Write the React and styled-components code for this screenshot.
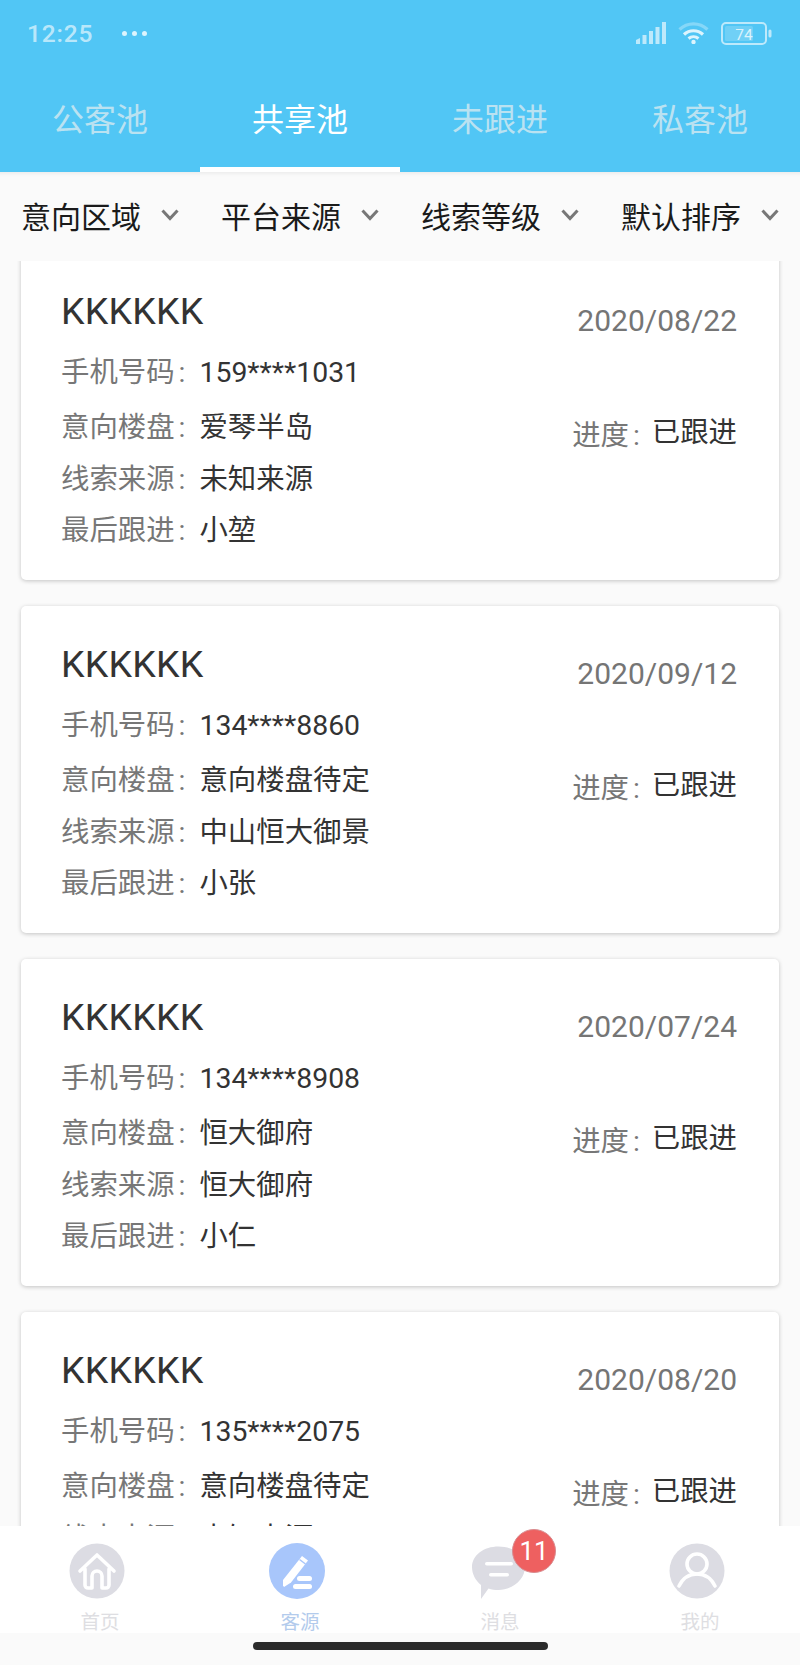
import styled, { createGlobalStyle } from "styled-components";

const GlobalStyle = createGlobalStyle`
  html, body {
    margin: 0;
    padding: 0;
    background: #fafafa;
  }

  * {
    box-sizing: border-box;
  }
`;

const Page = styled.div`
  display: flex;
  flex-direction: column;
  width: 800px;
  height: 1665px;
  overflow: hidden;
  background: #fafafa;
  font-family: Roboto, "Noto Sans CJK SC", sans-serif;
`;

const Header = styled.header`
  flex: none;
  height: 172px;
  background: #51c6f5;
`;

const StatusBar = styled.div`
  display: flex;
  align-items: center;
  height: 66px;
  padding: 0 28px 0 27px;
  color: rgba(255, 255, 255, 0.62);
`;

const Clock = styled.span`
  font-size: 24.5px;
  font-weight: 500;
  letter-spacing: 0.8px;
`;

const Dots = styled.div`
  display: flex;
  gap: 5px;
  margin-left: 29px;

  i {
    width: 5px;
    height: 5px;
    border-radius: 50%;
    background: rgba(255, 255, 255, 0.8);
  }
`;

const StatusIcons = styled.div`
  display: flex;
  align-items: center;
  gap: 12px;
  margin-left: auto;
`;

const Tabs = styled.nav`
  display: grid;
  grid-template-columns: repeat(4, 200px);
  height: 106px;
`;

const Tab = styled.div`
  display: flex;
  align-items: center;
  justify-content: center;
  border-bottom: 5px solid ${(p) => (p.$active ? "#ffffff" : "transparent")};
  color: ${(p) => (p.$active ? "#ffffff" : "rgba(235, 240, 240, 0.7)")};
  font-size: 32px;
`;

const FilterBar = styled.div`
  flex: none;
  display: grid;
  grid-template-columns: repeat(4, 200px);
  height: 89px;
  box-shadow: inset 0 5px 4px -4px rgba(0, 0, 0, 0.08);
`;

const Filter = styled.div`
  display: flex;
  align-items: center;
  gap: 20px;
  padding: 0 0 4px 21px;
  color: #1a1a1a;
  font-size: 30px;
`;

const ListWindow = styled.div`
  flex: 1;
  min-height: 0;
  overflow: hidden;
`;

const List = styled.div`
  display: flex;
  flex-direction: column;
  gap: 26px;
  margin-top: -8px;
  padding: 0 21px;
`;

const Card = styled.article`
  display: flex;
  justify-content: space-between;
  flex: none;
  height: 327px;
  padding: 0 42px 0 40px;
  background: #ffffff;
  border-radius: 5px;
  box-shadow: 0 1px 4px rgba(0, 0, 0, 0.22);
`;

const CardMain = styled.div`
  display: flex;
  flex-direction: column;
  padding-top: 33px;
`;

const Name = styled.div`
  height: 56.5px;
  color: #333333;
  font-size: 37.5px;
  line-height: 50px;
  letter-spacing: 0.2px;
`;

const Row = styled.div`
  height: ${(p) => p.$height}px;
  font-size: 28.4px;
  line-height: ${(p) => p.$height}px;
  white-space: nowrap;
`;

const Label = styled.span`
  color: #777777;
`;

const Colon = styled.span`
  margin-left: 4px;
`;

const Value = styled.span`
  margin-left: 14px;
  color: #333333;
`;

const CardSide = styled.div`
  display: flex;
  flex-direction: column;
  align-items: flex-end;
  padding-top: 46px;
`;

const DateText = styled.div`
  height: 44px;
  color: #757575;
  font-size: 30px;
  line-height: 44px;
`;

const Progress = styled.div`
  display: flex;
  align-items: flex-start;
  margin-top: 68px;
  font-size: 28.4px;
  line-height: 44px;
  white-space: nowrap;
`;

const ProgressLabel = styled(Label)`
  padding-top: 3px;
`;

const ProgressValue = styled(Value)`
  margin-left: 12px;
`;

const TabBar = styled.footer`
  flex: none;
  display: grid;
  grid-template-columns: repeat(4, 200px);
  height: 107px;
  background: #ffffff;
`;

const TabItem = styled.div`
  display: flex;
  flex-direction: column;
  align-items: center;
  padding-top: 17px;
  color: ${(p) => (p.$active ? "#b3cbec" : "#dedee2")};
  font-size: 19.5px;
  line-height: 20px;
`;

const TabIcon = styled.div`
  position: relative;
  width: 56px;
  height: 56px;
  margin: 0 6px 14px 0;
`;

const Badge = styled.span`
  position: absolute;
  top: -14px;
  left: 43px;
  display: flex;
  align-items: center;
  justify-content: center;
  width: 44px;
  height: 44px;
  border: 1px solid #d98b8f;
  border-radius: 50%;
  background: #ee6060;
  color: #ffffff;
  font-size: 26px;
`;

const GestureBar = styled.div`
  flex: none;
  display: flex;
  justify-content: center;
  height: 32px;
  padding-top: 9px;
  background: #fafafa;

  i {
    width: 295px;
    height: 8px;
    border-radius: 4px;
    background: #2b2b2b;
  }
`;

const SignalIcon = () => (
  <svg width="30" height="22" viewBox="0 0 30 22" fill="rgba(255,255,255,0.62)">
    <path d="M0 18l4-2v6H0z" />
    <rect x="6.5" y="13" width="4" height="9" />
    <rect x="13" y="9" width="4" height="13" />
    <rect x="19.5" y="5" width="4" height="17" />
    <rect x="26" y="0" width="4" height="22" />
  </svg>
);

const WifiIcon = () => (
  <svg width="31" height="22" viewBox="0 0 31 22" fill="none" strokeLinecap="butt">
    <path d="M1.5 7.5C9.500 0 21.500 0 29.500 7.500" stroke="rgba(255,255,255,0.3)" strokeWidth="3.200" />
    <path d="M6 12.500C11.500 7.500 19.500 7.500 25 12.500" stroke="rgba(255,255,255,0.8)" strokeWidth="3.200" />
    <path d="M10.500 16.500C13.500 14 17.500 14 20.500 16.500" stroke="rgba(255,255,255,0.8)" strokeWidth="3" />
    <circle cx="15.500" cy="20" r="2.200" fill="rgba(255,255,255,0.8)" />
  </svg>
);

const BatteryIcon = () => (
  <svg width="51" height="23" viewBox="0 0 51 23">
    <rect x="1" y="1" width="44" height="21" rx="4" fill="none" stroke="rgba(255,255,255,0.62)" strokeWidth="2" />
    <rect x="4" y="4" width="28" height="15" rx="1.500" fill="rgba(255,255,255,0.18)" />
    <rect x="47.500" y="7.500" width="3" height="8" rx="1.500" fill="rgba(255,255,255,0.62)" />
    <text x="23" y="17.500" textAnchor="middle" fontSize="15.500" fontFamily="Roboto, sans-serif" fill="rgba(255,255,255,0.75)">74</text>
  </svg>
);

const Chevron = () => (
  <svg width="18" height="12" viewBox="0 0 18 12" fill="none">
    <path d="M1.500 1.500L9 9.500l7.500-8" stroke="#777777" strokeWidth="3" />
  </svg>
);

const HomeIcon = () => (
  <svg width="56" height="56" viewBox="0 0 56 56">
    <circle cx="28" cy="28" r="27.500" fill="#dcdce3" />
    <path
      d="M11 28L28 12l17 16M16 26v16a3 3 0 0 0 3 3h4V33a5 5 0 0 1 10 0v12h4a3 3 0 0 0 3-3V26"
      fill="none"
      stroke="#ffffff"
      strokeWidth="3.600"
      strokeLinecap="round"
      strokeLinejoin="round"
    />
  </svg>
);

const SourceIcon = () => (
  <svg width="56" height="56" viewBox="0 0 56 56">
    <circle cx="28" cy="28" r="28" fill="#a8c6fb" />
    <path d="M33 13l6 4.500-17 22-7 4.500-1-1.500V37z" fill="#ffffff" />
    <path d="M30.500 16.500l6 4.500" stroke="#a8c6fb" strokeWidth="1.500" />
    <rect x="28" y="33" width="15" height="5" rx="2.500" fill="#ffffff" />
    <rect x="24" y="41" width="19" height="5" rx="2.500" fill="#ffffff" />
  </svg>
);

const MessageIcon = () => (
  <svg width="56" height="56" viewBox="-2 0 56 56">
    <path
      d="M1 24C1 12 13 3.500 27.500 3.500S54 12 54 24 42 47 27.500 47c-3.500 0-7-.5-10-1.500L10 56v-14C4.500 37.500 1 31 1 24z"
      fill="#dcdce3"
    />
    <rect x="14" y="19" width="28" height="3.500" rx="1.750" fill="#ffffff" />
    <rect x="18" y="30" width="20" height="3.500" rx="1.750" fill="#ffffff" />
  </svg>
);

const UserIcon = () => (
  <svg width="56" height="56" viewBox="0 0 56 56">
    <circle cx="28" cy="28" r="27.500" fill="#dcdce3" />
    <circle cx="28" cy="21" r="10" fill="none" stroke="#ffffff" strokeWidth="3.600" />
    <path d="M10 43c4-8 10-12 18-12s14 4 18 12" fill="none" stroke="#ffffff" strokeWidth="3.600" strokeLinecap="round" />
  </svg>
);

const tabs = ["公客池", "共享池", "未跟进", "私客池"];
const filters = ["意向区域", "平台来源", "线索等级", "默认排序"];

const leads = [
  { date: "2020/08/22", phone: "159****1031", estate: "爱琴半岛", source: "未知来源", last: "小堃" },
  { date: "2020/09/12", phone: "134****8860", estate: "意向楼盘待定", source: "中山恒大御景", last: "小张" },
  { date: "2020/07/24", phone: "134****8908", estate: "恒大御府", source: "恒大御府", last: "小仁" },
  { date: "2020/08/20", phone: "135****2075", estate: "意向楼盘待定", source: "未知来源", last: "小张" },
];

const App = () => {
  return (
    <Page>
      <GlobalStyle />
      <Header>
        <StatusBar>
          <Clock>12:25</Clock>
          <Dots>
            <i />
            <i />
            <i />
          </Dots>
          <StatusIcons>
            <SignalIcon />
            <WifiIcon />
            <BatteryIcon />
          </StatusIcons>
        </StatusBar>
        <Tabs>
          {tabs.map((tab) => (
            <Tab key={tab} $active={tab === "共享池"}>
              {tab}
            </Tab>
          ))}
        </Tabs>
      </Header>
      <FilterBar>
        {filters.map((filter) => (
          <Filter key={filter}>
            {filter}
            <Chevron />
          </Filter>
        ))}
      </FilterBar>
      <ListWindow>
        <List>
          {leads.map((lead) => (
            <Card key={lead.phone}>
              <CardMain>
                <Name>KKKKKK</Name>
                <Row $height={59.5}>
                  <Label>手机号码<Colon>:</Colon></Label>
                  <Value>{lead.phone}</Value>
                </Row>
                <Row $height={52}>
                  <Label>意向楼盘<Colon>:</Colon></Label>
                  <Value>{lead.estate}</Value>
                </Row>
                <Row $height={52}>
                  <Label>线索来源<Colon>:</Colon></Label>
                  <Value>{lead.source}</Value>
                </Row>
                <Row $height={50}>
                  <Label>最后跟进<Colon>:</Colon></Label>
                  <Value>{lead.last}</Value>
                </Row>
              </CardMain>
              <CardSide>
                <DateText>{lead.date}</DateText>
                <Progress>
                  <ProgressLabel>进度<Colon>:</Colon></ProgressLabel>
                  <ProgressValue>已跟进</ProgressValue>
                </Progress>
              </CardSide>
            </Card>
          ))}
        </List>
      </ListWindow>
      <TabBar>
        <TabItem>
          <TabIcon>
            <HomeIcon />
          </TabIcon>
          首页
        </TabItem>
        <TabItem $active>
          <TabIcon>
            <SourceIcon />
          </TabIcon>
          客源
        </TabItem>
        <TabItem>
          <TabIcon>
            <MessageIcon />
            <Badge>11</Badge>
          </TabIcon>
          消息
        </TabItem>
        <TabItem>
          <TabIcon>
            <UserIcon />
          </TabIcon>
          我的
        </TabItem>
      </TabBar>
      <GestureBar>
        <i />
      </GestureBar>
    </Page>
  );
};

export default App;
